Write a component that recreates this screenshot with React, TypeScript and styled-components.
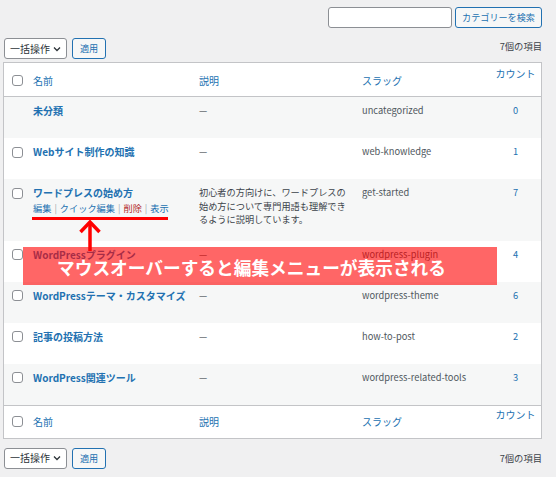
import React from "react";
import styled, { createGlobalStyle } from "styled-components";

const Global = createGlobalStyle`
  html, body { margin: 0; padding: 0; background: #f0f0f1; }
  body { font-family: "Noto Sans CJK JP", "Noto Sans", sans-serif; color: #3c434a; }
  * { box-sizing: border-box; }
`;

const Page = styled.div`
  position: relative;
  width: 556px;
  height: 477px;
  padding: 7px 14px 0 3px;
  overflow: hidden;
`;

const SearchBar = styled.div`
  display: flex;
  justify-content: flex-end;
  gap: 3px;
  height: 21px;
`;

const SearchInput = styled.input`
  width: 124px;
  height: 21px;
  margin: 0;
  border: 1px solid #8c8f94;
  border-radius: 3px;
  background: #fff;
`;

const Button = styled.button<{ $w: number }>`
  width: ${(p) => p.$w}px;
  height: 21px;
  margin: 0;
  padding: 0;
  border: 1px solid #2271b1;
  border-radius: 3px;
  background: #f6f7f7;
  color: #2271b1;
  font-family: inherit;
  font-size: 9.1px;
  line-height: 19px;
  white-space: nowrap;
`;

const TableNav = styled.div<{ $mt: number }>`
  display: flex;
  align-items: center;
  gap: 5px;
  height: 21px;
  margin-top: ${(p) => p.$mt}px;
  padding-left: 1px;
`;

const BulkSelect = styled.div`
  width: 63px;
  height: 21px;
  display: flex;
  align-items: center;
  gap: 3px;
  padding: 0 0 0 5px;
  border: 1px solid #8c8f94;
  border-radius: 3px;
  background: #fff;
  color: #2c3338;
  font-size: 10px;
  line-height: 1;
  white-space: nowrap;
`;

const ItemCount = styled.span<{ $lift: number }>`
  margin-left: auto;
  font-size: 9.3px;
  color: #3c434a;
  white-space: nowrap;
  transform: translateY(${(p) => -p.$lift}px);
`;

const Table = styled.table`
  width: 539px;
  margin-top: 3px;
  table-layout: fixed;
  border-collapse: separate;
  border-spacing: 0;
  border: 1px solid #c3c4c7;
  background: #fff;
`;

const HeadCell = styled.th<{ $foot?: boolean; $center?: boolean; $pt?: number }>`
  padding: ${(p) => (p.$pt ?? (p.$foot ? 8 : 10))}px ${(p) => (p.$center ? "0" : "7px")} 8px
    ${(p) => (p.$center ? "0" : "6px")};
  vertical-align: top;
  text-align: ${(p) => (p.$center ? "center" : "left")};
  font-weight: 400;
  font-size: 10px;
  line-height: 15px;
  height: 33px;
  color: #2271b1;
  white-space: nowrap;
  border-bottom: ${(p) => (p.$foot ? "none" : "1px solid #c3c4c7")};
  border-top: ${(p) => (p.$foot ? "1px solid #c3c4c7" : "none")};
`;

const CheckCell = styled.td<{ $pt: number; $foot?: boolean; $head?: boolean }>`
  padding: ${(p) => p.$pt}px 0 0 8px;
  vertical-align: top;
  border-bottom: ${(p) => (p.$head ? "1px solid #c3c4c7" : "none")};
  border-top: ${(p) => (p.$foot ? "1px solid #c3c4c7" : "none")};
`;

const Check = styled.span`
  display: block;
  width: 11px;
  height: 11px;
  border: 1px solid #8c8f94;
  border-radius: 3px;
  background: #fff;
`;

const Row = styled.tr<{ $odd: boolean }>`
  background: ${(p) => (p.$odd ? "#f6f7f7" : "#fff")};
`;

const Cell = styled.td<{ $tone?: "slug" | "count" | "desc" }>`
  padding: 7px ${(p) => (p.$tone === "count" ? "0" : "7px")} 5px
    ${(p) => (p.$tone === "count" ? "0" : "6px")};
  vertical-align: top;
  font-size: 9.3px;
  line-height: 13px;
  text-align: ${(p) => (p.$tone === "count" ? "center" : "left")};
  color: ${(p) =>
    p.$tone === "count" ? "#2271b1" : p.$tone === "slug" ? "#50575e" : "#3c434a"};
`;

const RowTitle = styled.a`
  display: block;
  font-size: 10px;
  line-height: 13px;
  font-weight: 700;
  color: #2271b1;
  text-decoration: none;
  white-space: nowrap;
`;

const RowActions = styled.div<{ $visible: boolean }>`
  margin-top: 2px;
  font-size: 9.2px;
  line-height: 14px;
  color: #a7aaad;
  white-space: nowrap;
  visibility: ${(p) => (p.$visible ? "visible" : "hidden")};
`;

const Action = styled.a<{ $danger?: boolean }>`
  color: ${(p) => (p.$danger ? "#b32d2e" : "#2271b1")};
  text-decoration: none;
`;

const Sep = styled.span`
  margin: 0 3px;
`;

const Desc = styled.p`
  margin: 0 0 9px;
  max-width: 149px;
  font-size: 9.2px;
  line-height: 13.5px;
  color: #3c434a;
  line-break: strict;
`;

const Underline = styled.div`
  position: absolute;
  left: 32px;
  top: 217px;
  width: 136px;
  height: 3px;
  background: #ff0000;
`;

const ArrowMark = styled.svg`
  position: absolute;
  left: 77.5px;
  top: 219px;
`;

const Banner = styled.div`
  position: absolute;
  left: 23px;
  top: 247px;
  width: 474px;
  height: 38px;
  display: flex;
  align-items: center;
  padding: 3px 0 0 34px;
  background: rgba(255, 0, 0, 0.6);
  color: #fff;
  font-size: 17.7px;
  font-weight: 700;
  line-height: 1;
  white-space: nowrap;
`;

type Term = { name: string; desc?: string; slug: string; count: number; actions?: boolean };

const terms: Term[] = [
  { name: "未分類", slug: "uncategorized", count: 0 },
  { name: "Webサイト制作の知識", slug: "web-knowledge", count: 1 },
  {
    name: "ワードプレスの始め方",
    desc: "初心者の方向けに、ワードプレスの始め方について専門用語も理解できるように説明しています。",
    slug: "get-started",
    count: 7,
    actions: true,
  },
  { name: "WordPressプラグイン", slug: "wordpress-plugin", count: 4 },
  { name: "WordPressテーマ・カスタマイズ", slug: "wordpress-theme", count: 6 },
  { name: "記事の投稿方法", slug: "how-to-post", count: 2 },
  { name: "WordPress関連ツール", slug: "wordpress-related-tools", count: 3 },
];

const Chevron = () => (
  <svg width="8" height="6" viewBox="0 0 8 6">
    <path d="M1 1.5 L4 4.5 L7 1.5" fill="none" stroke="#2c3338" strokeWidth="1.3" />
  </svg>
);

const HeaderRow = ({ foot }: { foot?: boolean }) => (
  <tr>
    <CheckCell $pt={foot ? 10 : 12} $foot={foot} $head={!foot}>
      <Check />
    </CheckCell>
    <HeadCell $foot={foot}>名前</HeadCell>
    <HeadCell $foot={foot}>説明</HeadCell>
    <HeadCell $foot={foot}>スラッグ</HeadCell>
    <HeadCell $foot={foot} $center $pt={foot ? 1 : 3}>
      カウント
    </HeadCell>
  </tr>
);

const Nav = ({ mt, lift }: { mt: number; lift: number }) => (
  <TableNav $mt={mt}>
    <BulkSelect>
      一括操作
      <Chevron />
    </BulkSelect>
    <Button $w={34}>適用</Button>
    <ItemCount $lift={lift}>7個の項目</ItemCount>
  </TableNav>
);

export default function App() {
  return (
    <Page>
      <Global />
      <SearchBar>
        <SearchInput type="text" />
        <Button $w={87}>カテゴリーを検索</Button>
      </SearchBar>
      <Nav mt={10} lift={3} />
      <Table>
        <colgroup>
          <col style={{ width: 23 }} />
          <col style={{ width: 166 }} />
          <col style={{ width: 163 }} />
          <col style={{ width: 134 }} />
          <col style={{ width: 51 }} />
        </colgroup>
        <thead>
          <HeaderRow />
        </thead>
        <tbody>
          {terms.map((t, i) => (
            <Row key={t.slug} $odd={i % 2 === 0}>
              <CheckCell $pt={8.5}>{i > 0 && <Check />}</CheckCell>
              <Cell>
                <RowTitle>{t.name}</RowTitle>
                <RowActions $visible={!!t.actions}>
                  <Action>編集</Action>
                  <Sep>|</Sep>
                  <Action>クイック編集</Action>
                  <Sep>|</Sep>
                  <Action $danger>削除</Action>
                  <Sep>|</Sep>
                  <Action>表示</Action>
                </RowActions>
              </Cell>
              <Cell $tone="desc">
                <Desc>{t.desc ?? "—"}</Desc>
              </Cell>
              <Cell $tone="slug">{t.slug}</Cell>
              <Cell $tone="count">{t.count}</Cell>
            </Row>
          ))}
        </tbody>
        <tfoot>
          <HeaderRow foot />
        </tfoot>
      </Table>
      <Nav mt={9} lift={0} />

      <Underline />
      <ArrowMark width="24" height="32" viewBox="0 0 24 32">
        <path d="M2.5 13 L12 3 L21.5 13" fill="none" stroke="#ff0000" strokeWidth="3.5" />
        <path d="M12 3 V32" fill="none" stroke="#ff0000" strokeWidth="3.5" />
      </ArrowMark>
      <Banner>マウスオーバーすると編集メニューが表示される</Banner>
    </Page>
  );
}
